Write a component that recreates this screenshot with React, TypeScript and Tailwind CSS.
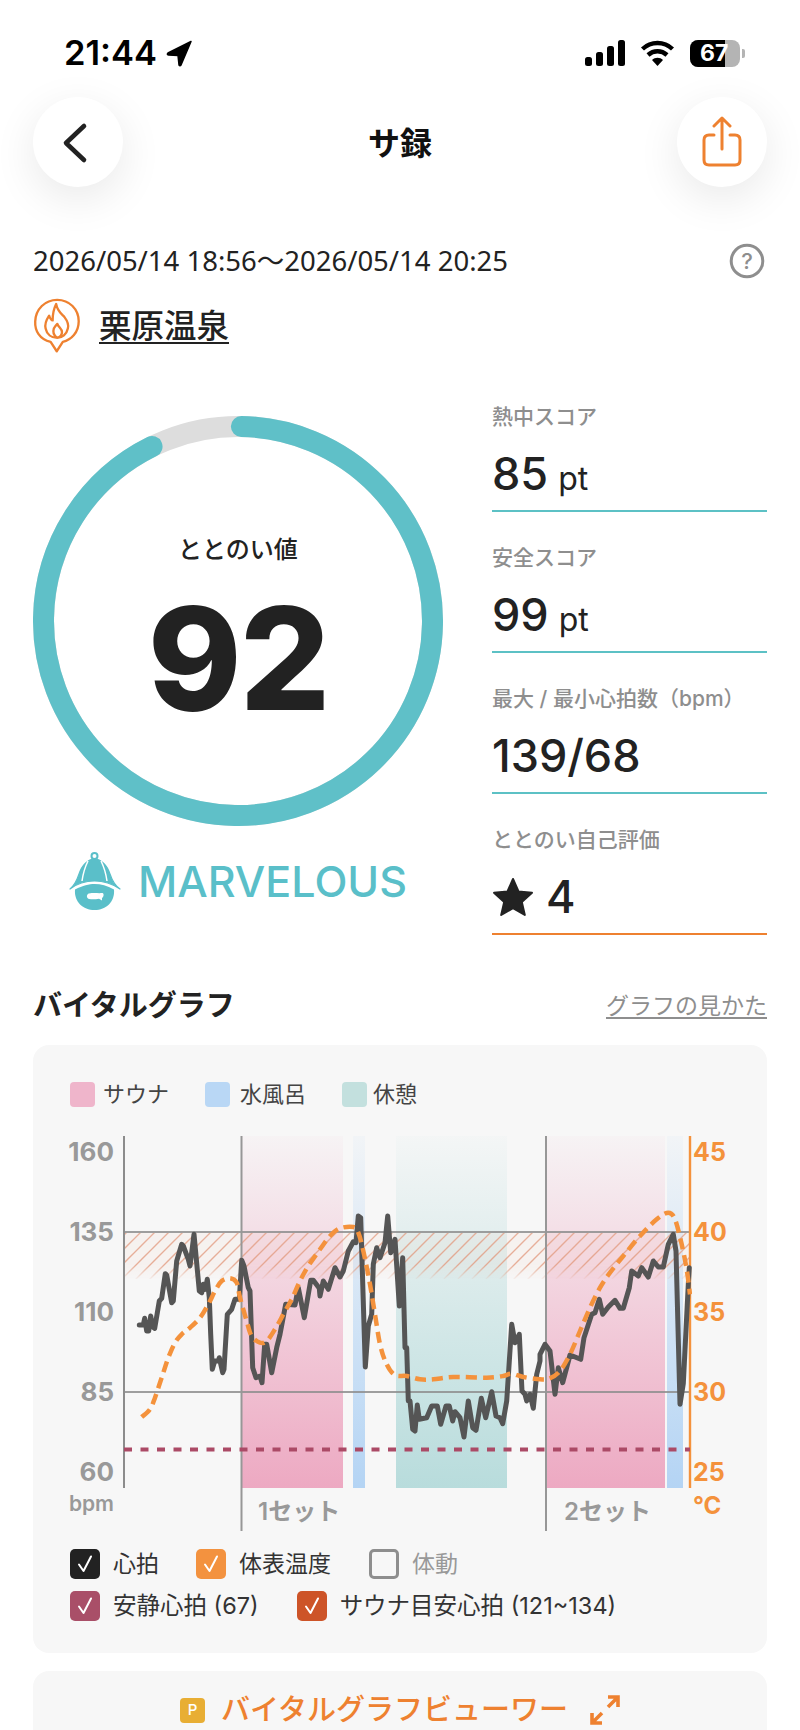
import React from "react";

const sans = "font-['Inter','Noto_Sans_CJK_JP',sans-serif]";

const z7 = [[58,372],[70,372],[74,352],[80,390],[86,390],[92,345],[98,378],[104,382],[118,300],[125,292],[136,218],[140,222],[155,305],[160,300],[170,180],[185,130],[190,135],[205,175],[210,195],[222,100],[238,270],[245,275],[250,250],[256,265],[262,235],[268,290],[272,400],[277,505],[284,480],[295,480],[298,470],[308,515],[312,505],[322,340],[335,325],[345,295],[358,295],[365,178],[372,195],[385,260],[390,270],[398,500],[408,530],[420,525],[426,545],[434,430],[440,430],[455,515],[470,440],[480,400],[497,310],[525,312],[535,260],[553,350],[572,238],[580,238],[598,262]];
const z8 = [[0,285],[10,240],[25,265],[45,200],[60,228],[70,210],[85,150],[100,122],[108,125],[115,45],[122,50],[136,498],[145,375],[155,340],[160,190],[170,140],[180,170],[195,125],[203,45],[212,155],[225,115],[238,315],[248,170],[255,440],[260,440],[265,600],[270,600],[278,685],[285,690],[292,612],[298,655],[320,650],[335,615],[352,615],[362,670],[378,615],[388,615],[398,660],[405,632],[420,650],[432,708],[445,600],[458,680],[468,688],[484,592],[497,650],[515,572],[528,645],[540,650],[548,668],[560,600],[575,370],[585,425],[598,400],[606,570],[615,580],[620,600],[630,580],[640,622],[650,520],[660,480]];
const z9 = [[0,460],[15,430],[30,450],[45,580],[55,500],[68,545],[90,462],[122,475],[132,410],[155,340],[165,335],[178,295],[188,340],[205,318],[225,298],[240,322],[250,322],[268,260],[275,210],[295,225],[305,200],[325,228],[340,180],[355,198],[370,198],[385,130],[400,100],[408,150],[420,610],[430,548],[445,250],[448,200]];
const t7 = [[65,648],[90,625],[105,590],[125,530],[145,470],[165,425],[185,400],[210,380],[240,350],[265,310],[285,270],[305,240],[330,232],[350,245],[360,290],[380,360],[395,405],[420,425],[440,420],[465,385],[490,340],[515,295],[540,240],[565,195],[600,145]];
const t8 = [[30,105],[60,82],[100,78],[115,95],[130,150],[150,250],[165,340],[180,430],[200,490],[225,522],[260,525],[300,535],[340,535],[400,528],[500,530],[550,525],[575,518],[610,528],[660,535]];
const t9 = [[30,532],[60,510],[90,460],[120,390],[150,320],[180,260],[210,215],[250,165],[300,105],[350,55],[385,35],[405,55],[425,130],[440,205],[450,280]];

const conv = (pts: number[][], ox: number) => pts.map(([x, y]) => [ox + x / 3, 1200 + y / 3]);
const hr = [...conv(z7, 120), ...conv(z8, 320), ...conv(z9, 540)];
const temp = [...conv(t7, 120), ...conv(t8, 320), ...conv(t9, 540)];
const linePath = (p: number[][]) => p.map(([x, y], i) => `${i ? "L" : "M"}${x.toFixed(1)} ${y.toFixed(1)}`).join(" ");
const smoothPath = (p: number[][]) => {
  let d = `M${p[0][0].toFixed(1)} ${p[0][1].toFixed(1)}`;
  for (let i = 0; i < p.length - 1; i++) {
    const a = p[Math.max(i - 1, 0)], b = p[i], c = p[i + 1], e = p[Math.min(i + 2, p.length - 1)];
    d += ` C${(b[0] + (c[0] - a[0]) / 6).toFixed(1)} ${(b[1] + (c[1] - a[1]) / 6).toFixed(1)} ${(c[0] - (e[0] - b[0]) / 6).toFixed(1)} ${(c[1] - (e[1] - b[1]) / 6).toFixed(1)} ${c[0].toFixed(1)} ${c[1].toFixed(1)}`;
  }
  return d;
};

function StatusBar() {
  return (
    <div className="h-[97px] pt-[36px] pl-[64px] pr-[55px] flex items-start justify-between">
      <div className="flex items-center h-[34px] gap-[9px]">
        <span className="text-[34.5px] leading-[34px] font-semibold text-black font-['Inter',sans-serif]">21:44</span>
        <svg width="27" height="27" viewBox="0 0 27 27">
          <path d="M25 1.5 L2 13 Q0.5 14.5 2.5 15 L12 15.5 L13 25 Q14 26.5 15 25 Z" fill="#000" stroke="#000" strokeWidth="1.5" strokeLinejoin="round" />
        </svg>
      </div>
      <div className="flex items-center h-[34px]">
        <svg width="40" height="26" viewBox="0 0 40 26" className="mr-[15px]">
          <rect x="0" y="17" width="7" height="9" rx="2.5" fill="#000" />
          <rect x="11" y="12" width="7" height="14" rx="2.5" fill="#000" />
          <rect x="22" y="6" width="7" height="20" rx="2.5" fill="#000" />
          <rect x="33" y="0" width="7" height="26" rx="2.5" fill="#000" />
        </svg>
        <svg width="35" height="26" viewBox="0 0 35 26" className="mr-[15px]">
          <path d="M2.5 9 C11 1 24 1 32.5 9" fill="none" stroke="#000" strokeWidth="4.4" />
          <path d="M8 15 C13.5 10 21.5 10 27 15" fill="none" stroke="#000" strokeWidth="4.4" />
          <path d="M12 20 C15 17 20 17 23 20 L17.5 26 Z" fill="#000" />
        </svg>
        <div className="relative w-[50px] h-[27px] rounded-[8px] bg-[#b4b4b4] overflow-hidden">
          <div className="w-[35px] h-full bg-black" />
          <span className="absolute inset-0 flex items-center pl-[10px] text-[23px] leading-[27px] font-bold text-white font-['Inter',sans-serif]">67</span>
        </div>
        <div className="w-[3px] h-[9px] ml-[2px] rounded-r-[2px] bg-[#b4b4b4]" />
      </div>
    </div>
  );
}

function NavBar() {
  const circle = "w-[90px] h-[90px] rounded-full bg-white flex items-center justify-center shadow-[0_12px_44px_rgba(0,0,0,0.09)]";
  return (
    <div className="flex items-center justify-between px-[33px] h-[90px]">
      <div className={circle}>
        <svg width="30" height="42" viewBox="0 0 30 42" className="mr-[8px] mt-[2px]">
          <path d="M25 4 L7 21 L25 38" fill="none" stroke="#222" strokeWidth="4.6" strokeLinecap="round" strokeLinejoin="round" />
        </svg>
      </div>
      <div className={`mt-[4px] text-[32px] leading-[40px] font-bold text-[#111] ${sans}`}>サ録</div>
      <div className={circle}>
        <svg width="40" height="52" viewBox="0 0 40 52">
          <path d="M12 19 H7 Q2 19 2 24 V44 Q2 49 7 49 H33 Q38 49 38 44 V24 Q38 19 33 19 H28" fill="none" stroke="#ee8130" strokeWidth="3" strokeLinecap="round" />
          <path d="M20 33 V3 M12 10 L20 2 L28 10" fill="none" stroke="#ee8130" strokeWidth="3" strokeLinecap="round" strokeLinejoin="round" />
        </svg>
      </div>
    </div>
  );
}

function Ring() {
  const r = 194.5;
  const c = 2 * Math.PI * r;
  return (
    <div className="relative w-[410px] h-[410px] mt-[16px]">
      <svg width="410" height="410" viewBox="0 0 410 410">
        <circle cx="205" cy="205" r={r} fill="none" stroke="#dddddd" strokeWidth="21" />
        <circle cx="205" cy="205" r={r} fill="none" stroke="#5fc0c8" strokeWidth="21" strokeLinecap="round"
          strokeDasharray={`${c * 0.924} ${c}`} transform="rotate(-89 205 205)" />
      </svg>
      <div className="absolute inset-0 flex flex-col items-center">
        <div className={`mt-[117px] text-[24px] leading-[34px] font-medium text-[#222] ${sans}`}>ととのい値</div>
        <div className="mt-[20px] text-[142px] leading-[142px] font-extrabold tracking-[-2px] text-[#222] font-['Inter',sans-serif]">92</div>
      </div>
    </div>
  );
}

function Mascot() {
  return (
    <svg width="52" height="58" viewBox="8 6 52 58">
      <circle cx="33.500" cy="10" r="3" fill="none" stroke="#5abfc9" strokeWidth="2" />
      <path d="M9 43 C14 39 16 34 18 28 C21 19 27 13 33.500 13 C40 13 46 19 49 28 C51 34 53 39 59 43 C50 37 42 35 33.500 35 C25 35 17 37 9 43 Z" fill="#5abfc9" stroke="#5abfc9" strokeWidth="1.2" strokeLinejoin="round" />
      <path d="M27 15 C24 21 22 28 21 35 M40 15 C43 21 45 28 46 35" fill="none" stroke="#fff" strokeWidth="1.5" />
      <path d="M14 43.500 C22 39.500 28 38 33.500 38 C40 38 46 39.500 53 43.500 C54 56 45 64 33.500 64 C22 64 13 56 14 43.500 Z" fill="#5abfc9" />
      <path d="M28 47.500 C33 46.500 37 47.500 41.500 47 C43 47 43 51 41 52 L41 54.500 L38 52.800 C34 53.500 31 53.500 28 53 C25 52 25.500 48 28 47.500 Z" fill="#fff" />
    </svg>
  );
}

function Stat({ label, children, orange }: { label: string; children: React.ReactNode; orange?: boolean }) {
  return (
    <div className={`h-[112px] border-b-2 ${orange ? "border-[#ee8130]" : "border-[#5cc1c5]"}`}>
      <div className={`mt-[2px] h-[30px] text-[21px] leading-[30px] font-medium text-[#8e8e8e] ${sans}`}>{label}</div>
      <div className="mt-[23px] h-[38px] flex items-baseline text-[45px] leading-[38px] font-medium text-[#222] font-['Inter',sans-serif]">{children}</div>
    </div>
  );
}

function Chart() {
  const Y = [160, 135, 110, 85, 60];
  const T = [45, 40, 35, 30, 25];
  const regions: [number, number, string][] = [
    [242, 343, "url(#gs)"],
    [353, 365, "url(#gc)"],
    [396, 507, "url(#gr)"],
    [547, 665, "url(#gs)"],
    [667, 683, "url(#gc)"],
  ];
  return (
    <div className="flex h-[400px] mt-[24px]">
      <div className="w-[50px] pr-[6px] pt-[5px] flex flex-col items-end gap-[48px]">
        {Y.map((n) => (
          <div key={n} className="h-[32px] text-[26px] leading-[32px] font-bold text-[#999] font-['Inter',sans-serif]">{n}</div>
        ))}
        <div className="-mt-[44px] h-[24px] text-[21px] leading-[24px] font-semibold text-[#999] font-['Inter',sans-serif]">bpm</div>
      </div>
      <svg width="572" height="400" viewBox="120 1130 572 400">
        <defs>
          <linearGradient id="gs" x1="0" y1="0" x2="0" y2="1">
            <stop offset="0" stopColor="#eda9c2" stopOpacity="0.05" />
            <stop offset="1" stopColor="#eda9c2" />
          </linearGradient>
          <linearGradient id="gc" x1="0" y1="0" x2="0" y2="1">
            <stop offset="0" stopColor="#b4d4f4" stopOpacity="0.08" />
            <stop offset="1" stopColor="#b4d4f4" />
          </linearGradient>
          <linearGradient id="gr" x1="0" y1="0" x2="0" y2="1">
            <stop offset="0" stopColor="#b8dcdc" stopOpacity="0.05" />
            <stop offset="1" stopColor="#b8dcdc" />
          </linearGradient>
          <pattern id="hatch" width="14" height="14" patternUnits="userSpaceOnUse">
            <path d="M-3.500 3.500 L3.500 -3.500 M0 14 L14 0 M10.500 17.500 L17.500 10.500" stroke="#e29a7e" strokeWidth="1.400" />
          </pattern>
          <linearGradient id="fade" x1="0" y1="0" x2="0" y2="1">
            <stop offset="0" stopColor="#fff" stopOpacity="0.75" />
            <stop offset="0.7" stopColor="#fff" stopOpacity="0.8" />
            <stop offset="1" stopColor="#fff" stopOpacity="0.1" />
          </linearGradient>
          <mask id="bandMask" maskUnits="userSpaceOnUse" x="124" y="1232" width="566" height="46">
            <rect x="124" y="1232" width="566" height="46" fill="url(#fade)" />
          </mask>
        </defs>
        {regions.map(([a, b, f]) => (
          <rect key={a} x={a} y="1135" width={b - a} height="352" fill={f} />
        ))}
        <g mask="url(#bandMask)">
          <rect x="124" y="1232" width="566" height="46" fill="#f2b79c" opacity="0.1" />
          <rect x="124" y="1232" width="566" height="46" fill="url(#hatch)" />
        </g>
        <path d="M124 1231 H690 M124 1391 H690" stroke="#8f8f8f" strokeWidth="1.8" opacity="0.85" />
        <path d="M124 1135 V1487" stroke="#8c8c8c" strokeWidth="2" />
        <path d="M241.500 1135 V1530 M546 1135 V1530" stroke="#979797" strokeWidth="2" />
        <path d="M690 1135 V1487" stroke="#f4923c" strokeWidth="2.4" />
        <path d="M124 1448.500 H690" stroke="#ab4a66" strokeWidth="4.2" strokeDasharray="8 8.500" />
        <path d={linePath(hr)} fill="none" stroke="#555555" strokeWidth="5" strokeLinejoin="round" strokeLinecap="round" />
        <path d={smoothPath(temp)} fill="none" stroke="#f4923c" strokeWidth="4.500" strokeDasharray="11 6" />
        <text x="258" y="1519" fontSize="24" fontWeight="600" fill="#999" className={sans}>1セット</text>
        <text x="564" y="1519" fontSize="24" fontWeight="600" fill="#999" className={sans}>2セット</text>
      </svg>
      <div className="w-[38px] pl-[1px] pt-[5px] flex flex-col items-start gap-[48px]">
        {T.map((n) => (
          <div key={n} className="h-[32px] text-[25px] leading-[32px] font-bold text-[#f4923c] font-['Inter',sans-serif]">{n}</div>
        ))}
        <div className="-mt-[43px] h-[26px] text-[24px] leading-[26px] font-bold text-[#f4923c] font-['Inter',sans-serif]">°C</div>
      </div>
    </div>
  );
}

function Check({ color, label, muted, className = "", big }: { color?: string; label: string; muted?: boolean; className?: string; big?: boolean }) {
  return (
    <div className={`flex items-center gap-[13px] ${className}`}>
      {color ? (
        <div className={`w-[30px] h-[30px] rounded-[5px] flex items-center justify-center ${color}`}>
          <svg width="18" height="20" viewBox="0 0 18 20">
            <path d="M3 10.500 L7.500 17 L15 2.500" fill="none" stroke="#fff" strokeWidth="2" strokeLinejoin="round" strokeLinecap="round" />
          </svg>
        </div>
      ) : (
        <div className="w-[30px] h-[30px] rounded-[5px] border-[3px] border-[#8e8e8e]" />
      )}
      <span className={`${big ? "text-[23.5px]" : "text-[23px]"} leading-[30px] ${muted ? "text-[#999]" : "text-[#333]"} ${sans}`}>{label}</span>
    </div>
  );
}

function Swatch({ color, label, className = "", gap }: { color: string; label: string; className?: string; gap: string }) {
  return (
    <div className={`flex items-center ${gap} ${className}`}>
      <div className={`w-[25px] h-[25px] rounded-[4px] ${color}`} />
      <span className={`text-[22px] leading-[25px] text-[#444] ${sans}`}>{label}</span>
    </div>
  );
}

export default function App() {
  return (
    <div className={`w-[800px] h-[1730px] overflow-hidden bg-white ${sans}`}>
      <StatusBar />
      <NavBar />
      <div className="px-[33px]">
        <div className="mt-[56px] h-[36px] flex items-center justify-between">
          <span className="text-[27.5px] leading-[36px] text-[#222] font-['Noto_Sans','Noto_Sans_CJK_JP',sans-serif]">2026/05/14 18:56～2026/05/14 20:25</span>
          <svg width="36" height="36" viewBox="0 0 36 36" className="mr-[2px]">
            <circle cx="18" cy="18" r="15.800" fill="none" stroke="#8e8e8e" strokeWidth="3" />
            <text x="18" y="26" textAnchor="middle" fontSize="22" fontWeight="500" fill="#8e8e8e" className={sans}>?</text>
          </svg>
        </div>
        <div className="mt-[19px] h-[56px] flex items-center">
          <svg width="58" height="58" viewBox="5 5 62 62" className="-ml-[2px]">
            <path d="M26 53 C14 50 9 41 9.500 31 C10 18 20 8 33 8 C46 8 56 18 56 31 C56 43 48 51 39 53 L32.500 63 Z" fill="none" stroke="#ee8130" strokeWidth="2.500" strokeLinejoin="round" />
            <g transform="translate(32.500 30) scale(1.25) translate(-32.500 -30)">
              <path d="M32 16 C33 22 36 24 39 27 C42 31 43 34 42 37 C41 42 37 45 33 45 C28 45 24 42 23 37 C22 33 24 29 26 26 C27 29 28 30 29 30 C29 25 30 20 32 16 Z M33 45 C30 43 29 40 30 37 C31 35 32 34 33 33 C34 36 37 37 37 40 C37 42 36 44 33 45" fill="none" stroke="#ee8130" strokeWidth="2" strokeLinejoin="round" />
            </g>
          </svg>
          <span className="ml-[10px] mt-[2px] text-[32.5px] leading-[44px] font-medium text-[#222] underline underline-offset-[4px] decoration-[2px]">栗原温泉</span>
        </div>
        <div className="flex mt-[46px]">
          <div className="w-[410px]">
            <Ring />
            <div className="mt-[26px] h-[58px] flex items-center justify-center gap-[17px]">
              <Mascot />
              <span className="text-[43px] leading-[56px] font-medium text-[#5abfc9] font-['Inter',sans-serif]">MARVELOUS</span>
            </div>
          </div>
          <div className="ml-[49px] w-[275px] flex flex-col gap-[29px]">
            <Stat label="熱中スコア">85<span className="ml-[10px] text-[32px] font-normal">pt</span></Stat>
            <Stat label="安全スコア">99<span className="ml-[10px] text-[32px] font-normal">pt</span></Stat>
            <Stat label="最大 / 最小心拍数（bpm）">139/68</Stat>
            <Stat label="ととのい自己評価" orange>
              <svg width="42" height="40" viewBox="0 0 42 40" className="mr-[12px] self-center">
                <path d="M21 2 L26.500 14.500 L40 15.800 L29.800 25 L32.800 38 L21 31.200 L9.200 38 L12.200 25 L2 15.800 L15.500 14.500 Z" fill="#222" stroke="#222" strokeWidth="2" strokeLinejoin="round" />
              </svg>
              4
            </Stat>
          </div>
        </div>
        <div className="mt-[51px] h-[40px] flex items-center justify-between">
          <span className="text-[29px] leading-[40px] font-bold text-[#222]">バイタルグラフ</span>
          <span className="text-[23px] leading-[32px] text-[#8e8e8e] underline underline-offset-[3px]">グラフの見かた</span>
        </div>
        <div className="mt-[19px] h-[608px] rounded-[16px] bg-[#f7f7f7] pt-[37px] px-[37px]">
          <div className="flex h-[25px]">
            <Swatch color="bg-[#efb5cb]" label="サウナ" gap="gap-[8px]" />
            <Swatch color="bg-[#b9d7f5]" label="水風呂" gap="gap-[10px]" className="ml-[36px]" />
            <Swatch color="bg-[#c3e0de]" label="休憩" gap="gap-[6px]" className="ml-[36px]" />
          </div>
          <Chart />
          <div className="mt-[18px] flex flex-col gap-[12px]">
            <div className="flex">
              <Check color="bg-[#222222]" label="心拍" />
              <Check color="bg-[#f3923f]" label="体表温度" className="ml-[37px]" />
              <Check label="体動" muted className="ml-[38px]" />
            </div>
            <div className="flex">
              <Check big color="bg-[#a94f68]" label="安静心拍 (67)" />
              <Check big color="bg-[#cd5428]" label="サウナ目安心拍 (121~134)" className="ml-[38px]" />
            </div>
          </div>
        </div>
        <div className="mt-[18px] h-[100px] rounded-t-[16px] bg-[#f7f7f7] pt-[23px] flex items-start justify-center">
          <div className="flex items-center h-[32px]">
            <div className="w-[25px] h-[25px] rounded-[4px] bg-[#e8ae34] flex items-center justify-center text-[15px] leading-[24px] font-medium text-white font-['Inter',sans-serif]">P</div>
            <span className="ml-[16px] text-[29px] leading-[32px] font-medium text-[#ee8130]">バイタルグラフビューワー</span>
            <svg width="30" height="30" viewBox="0 0 30 30" className="ml-[22px]">
              <path d="M18 2 H28 V12 M28 2 L18 12 M12 18 L2 28 M2 18 V28 H12" fill="none" stroke="#ee8130" strokeWidth="3.600" />
            </svg>
          </div>
        </div>
      </div>
    </div>
  );
}
